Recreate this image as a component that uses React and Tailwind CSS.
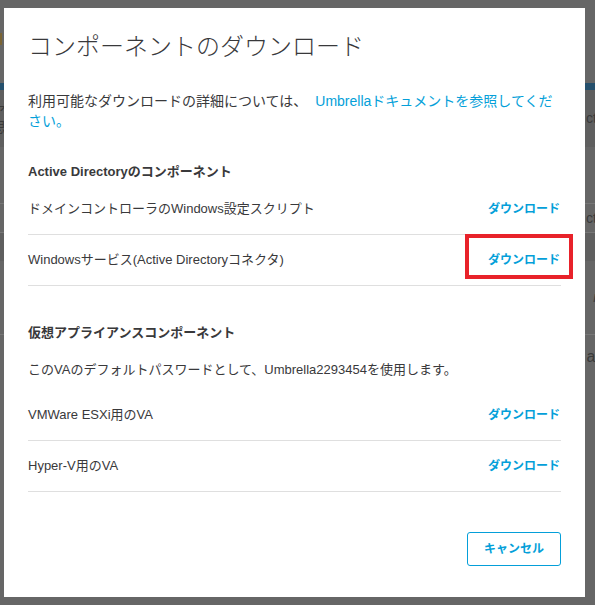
import React from "react";

const FONT = { fontFamily: '"Liberation Sans", "Noto Sans CJK JP", sans-serif' };

function Row({ label, highlight }) {
  return (
    <div className="flex h-[51px] items-center justify-between border-b border-[#dfdfdf]">
      <span className="text-[13px] leading-[18px] text-[#39393b]">{label}</span>
      <span className="relative mr-px text-[12px] font-bold leading-[18px] text-[#049fd9]">
        ダウンロード
        {highlight && (
          <span className="absolute -bottom-[10px] -left-[23px] -right-[13px] -top-[17px] border-4 border-[#e8222a]" />
        )}
      </span>
    </div>
  );
}

function Background() {
  return (
    <div className="flex flex-col text-[#3a3a3a]">
      <div className="h-[33px]" />
      <div className="flex h-[12px] items-center">
        <span className="h-[12px] w-[2px] bg-[#7a6434]" />
      </div>
      <div className="h-[38px]" />
      <div className="h-[7px] bg-[#25506d]" />
      <div className="flex h-[57px] items-center justify-between bg-[#5f5f5f] text-[14px]">
        <span className="-ml-[8px] leading-[16px]">ア<br />思</span>
        <span className="-mr-[2px]">ct</span>
      </div>
      <div className="h-[56px]" />
      <div className="flex h-[30px] items-center justify-end border-y border-[#777] text-[14px]">
        <span className="-mr-[2px]">ct</span>
      </div>
      <div className="h-[28px] bg-[#5f5f5f]" />
      <div className="flex h-[74px] items-center justify-end border-b border-[#777] text-[14px]">
        <span className="-mr-[3px] italic">r</span>
      </div>
      <div className="flex h-[44px] items-center justify-end text-[16px]">
        <span className="-mr-[4px]">ai</span>
      </div>
    </div>
  );
}

export default function App() {
  return (
    <div className="relative h-[605px] w-[595px] overflow-hidden bg-[#666666]" style={FONT}>
      <Background />
      <div className="absolute inset-0 pl-[4px] pt-[8px]">
        <div className="flex h-[589px] w-[581px] flex-col bg-white px-6 pt-[23px]">
          <h1 className="text-[24px] font-light leading-[32px] text-[#39393b]">
            コンポーネントのダウンロード
          </h1>
          <p className="mt-[28px] text-[14px] leading-[20px] text-[#39393b]">
            <span className="whitespace-nowrap">
              利用可能なダウンロードの詳細については、
              <span className="ml-[8px] text-[#049fd9]">Umbrellaドキュメントを参照してくだ</span>
            </span>
            <br />
            <span className="text-[#049fd9]">さい。</span>
          </p>

          <h2 className="mt-[31px] text-[13px] font-bold leading-[20px] text-[#39393b]">
            Active Directoryのコンポーネント
          </h2>
          <div className="mt-[2px] flex flex-col">
            <Row label="ドメインコントローラのWindows設定スクリプト" />
            <Row label="Windowsサービス(Active Directoryコネクタ)" highlight />
          </div>

          <h2 className="mt-[37px] text-[13px] font-bold leading-[20px] text-[#39393b]">
            仮想アプライアンスコンポーネント
          </h2>
          <p className="mt-[17px] text-[13px] leading-[20px] text-[#39393b]">
            このVAのデフォルトパスワードとして、Umbrella2293454を使用します。
          </p>
          <div className="mt-[10px] flex flex-col">
            <Row label="VMWare ESXi用のVA" />
            <Row label="Hyper-V用のVA" />
          </div>

          <div className="mt-[40px] flex justify-end">
            <button className="h-[34px] w-[94px] rounded-[3px] border border-[#049fd9] text-[12px] font-bold text-[#049fd9]">
              キャンセル
            </button>
          </div>
        </div>
      </div>
    </div>
  );
}
